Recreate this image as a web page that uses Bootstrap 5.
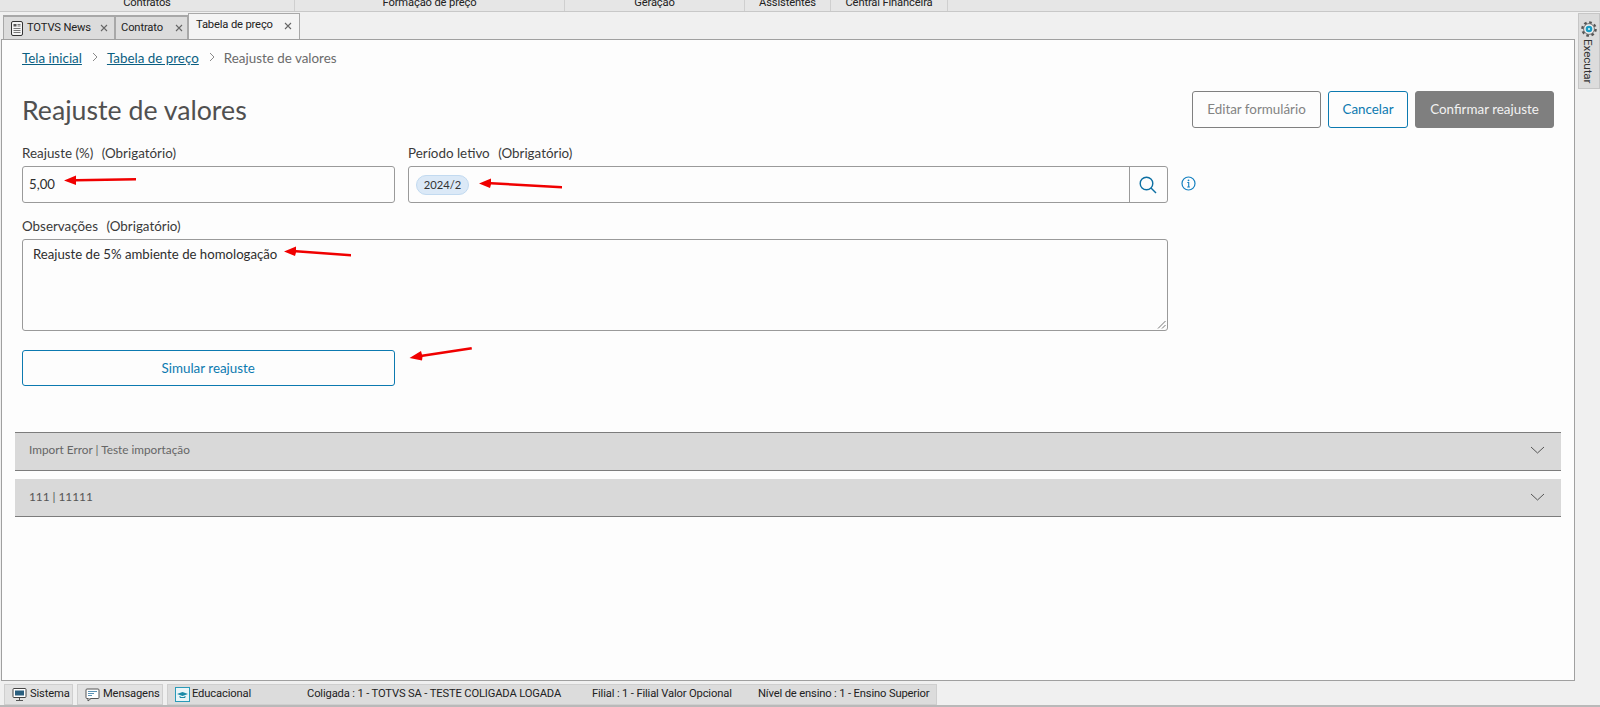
<!DOCTYPE html>
<html lang="pt-BR"><head><meta charset="utf-8"><title>Reajuste de valores</title>
<link href="https://cdn.jsdelivr.net/npm/bootstrap@5.3.0/dist/css/bootstrap.min.css" rel="stylesheet">
<style>
html,body{height:707px;overflow:hidden}
body{background:#f0f0f0;font-family:"Lato","Liberation Sans",sans-serif;color:#333}
.desk{font-family:"Roboto","Noto Sans",sans-serif;font-size:11.2px;letter-spacing:-.15px;color:#222}
.shell{width:1600px;height:707px}
.ribbon{height:12px;background:#e6e6e6;border-bottom:1px solid #c8c8c8;overflow:hidden}
.ribbon span{height:11px;line-height:0;padding-top:3px;border-right:1px solid #cfcfcf;text-align:center;display:block}
.r1{width:295px}.r2{width:270px}.r3{width:180px}.r4{width:86px}.r5{width:117px}
.tabstrip{height:27px;padding-left:3px}
.dtab{height:24px;background:#dcdcdc;border:2px solid #a8a8a8;border-bottom:0;border-right-width:1px;border-left-width:1px;padding:0 4px 0 5px;flex-shrink:0}
.dtab.on{height:26px;background:#f4f4f4;border-width:1px;border-bottom:0;padding:0 7px 2px 7px}
.wtotvs{width:112px;padding-left:7px;padding-right:6px}.wcontr{width:73px}.wtab{width:112px}
.closex{margin-left:auto;flex-shrink:0}
.mainrow{height:642px;padding-left:1px}
.panel{width:1574px;height:642px;flex-shrink:0;background:#fdfdfd;border:1px solid #a0a0a0;padding:0 13px 0 13px}
.crumbs{padding:8px 0 0 7px;height:50px;font-size:13.4px;color:#6b6b6b}
.crumbs a{color:#0b5f82}
.crumbs svg{margin:0 9px 0 10px}
.pagehead{padding:0 7px 0 7px;height:38px}
.pagetitle{font-size:26.7px;font-weight:400;color:#505050;margin:0;line-height:38px;padding-top:2px}
.headbtns{gap:7px}
.tb{height:37px;font-size:13.4px;border-radius:3px;padding:0;font-family:"Lato",sans-serif}
.tb1{width:129px;background:transparent;border:1px solid #808080;color:#838383}
.tb2{width:80px;background:transparent;border:1px solid #0c7ab0;color:#0c7ab0}
.tb3{width:139px;background:#7f7f7f;border:1px solid #7f7f7f;color:#f2f2f2}
.fieldarea{padding:17px 0 0 7px;width:1160px}
.flabel{font-size:13.4px;color:#3a3a3a;line-height:17px;margin:0 0 4px;display:block}
.flabel i{font-style:normal;margin-left:5px}
.labeltwo{margin-top:15px}
.f1{width:372.5px;flex-shrink:0}.f2{width:759.500px;margin-left:13.500px;flex-shrink:0}
.box{height:37px;background:#fdfdfd;border:1px solid #9a9a9a;border-radius:3px;font-size:13.2px;color:#2e2e2e;padding:0 7px}
.valbox{padding-left:6px}
.chipx{height:20px;width:53px;border-radius:10px;background:#dbe9f7;border:1px solid #c2daf0;font-size:11.2px;text-align:center;line-height:18px;color:#333}
.srch{width:38px;height:35px;border-left:1px solid #9a9a9a;margin-right:-7px}
.infoic{margin-left:13px;margin-bottom:12px;flex-shrink:0;line-height:0}
.areabox{width:1146px;height:92px;padding:6px 10px;line-height:17px}
.grip{position:absolute;right:1px;bottom:1px}
.simbtn{width:372.5px;height:36px;margin-top:19px;background:transparent;border:1px solid #0c7ab0;border-radius:3px;color:#0c7ab0;font-size:13.4px;font-family:"Lato",sans-serif;padding:0}
.accs{margin-top:46px}
.accrow{height:38px;background:#d9d9d9;padding:0 16px 2px 14px;font-size:11.8px;color:#666;border-bottom:1px solid #7c7c7c}
.accrow.one{border-top:1px solid #7c7c7c;height:39px;padding-bottom:3px}
.accrow.two{margin-top:8px;color:#555}
.sidecol{padding:0 0 0 3px;margin-top:-26px;height:76px}
.sidetab{width:22px;height:76px;background:#dcdcdc;border:1px solid #c6c6c6;padding-top:7px}
.vtxt{writing-mode:vertical-rl;color:#333;font-size:11.8px;line-height:1;margin:2px 3px 0 0}
.statusrow{height:24px;padding:3px 0 0 4px}
.sbtn{height:21px;background:#e2e2e2;border:1px solid #cfcfcf;margin-right:4px;gap:3px;padding:0 0 0 7px;flex-shrink:0}
.wsis{width:69px}.wmsg{width:86px}
.sbar{background:#dcdcdc;border:1px solid #cfcfcf;height:21px;width:770px;flex-shrink:0;padding:0 0 0 7px;white-space:nowrap}
.capx{width:132px;gap:2px;flex-shrink:0}
.s1{width:285px;flex-shrink:0}.s2{width:166px;flex-shrink:0}
.botline{height:2px;background:#b9b9b9}
.redmarks{position:absolute;left:0;top:0;pointer-events:none}
.redmarks polygon{fill:#f00000}
</style></head><body>
<div class="shell d-flex flex-column position-relative">
 <div class="ribbon desk d-flex"><span class="r1">Contratos</span><span class="r2">Formação de preço</span><span class="r3">Geração</span><span class="r4">Assistentes</span><span class="r5">Central Financeira</span></div>
 <div class="tabstrip desk d-flex align-items-end">
  <div class="dtab wtotvs d-flex align-items-center"><svg width="12" height="15" viewBox="0 0 12 15" class="me-1 flex-shrink-0"><rect x=".5" y=".5" width="11" height="14" rx="1.500" fill="#f4f4f4" stroke="#333"/><path d="M2.500 3h3v2.500h-3z" fill="#555"/><path d="M6.500 3.500h3M6.500 5h3M2.500 7.500h7M2.500 9.500h7M2.500 11.500h7" stroke="#777"/></svg><span>TOTVS News</span><svg class="closex" width="8" height="8" viewBox="0 0 8 8"><path d="M1 1l6 6M7 1L1 7" stroke="#666" stroke-width="1.100"/></svg></div>
  <div class="dtab wcontr d-flex align-items-center"><span>Contrato</span><svg class="closex" width="8" height="8" viewBox="0 0 8 8"><path d="M1 1l6 6M7 1L1 7" stroke="#666" stroke-width="1.100"/></svg></div>
  <div class="dtab on wtab d-flex align-items-center"><span>Tabela de preço</span><svg class="closex" width="8" height="8" viewBox="0 0 8 8"><path d="M1 1l6 6M7 1L1 7" stroke="#666" stroke-width="1.100"/></svg></div>
 </div>
 <div class="mainrow d-flex">
  <div class="panel">
   <div class="crumbs d-flex align-items-start"><a href="#">Tela inicial</a><svg width="6" height="10" viewBox="0 0 6 10" class="mt-1"><path d="M1 1l4 4-4 4" fill="none" stroke="#8a8a8a"/></svg><a href="#">Tabela de preço</a><svg width="6" height="10" viewBox="0 0 6 10" class="mt-1"><path d="M1 1l4 4-4 4" fill="none" stroke="#8a8a8a"/></svg><span>Reajuste de valores</span></div>
   <div class="pagehead d-flex align-items-center justify-content-between">
    <h1 class="pagetitle">Reajuste de valores</h1>
    <div class="d-flex headbtns"><button class="btn tb tb1">Editar formulário</button><button class="btn tb tb2">Cancelar</button><button class="btn tb tb3">Confirmar reajuste</button></div>
   </div>
   <div class="fieldarea">
    <div class="d-flex">
     <div class="f1"><label class="flabel">Reajuste (%) <i>(Obrigatório)</i></label><div class="box valbox d-flex align-items-center">5,00</div></div>
     <div class="f2"><label class="flabel">Período letivo <i>(Obrigatório)</i></label><div class="box d-flex align-items-center"><span class="chipx">2024/2</span><span class="srch ms-auto d-flex align-items-center justify-content-center"><svg width="18" height="18" viewBox="0 0 18 18"><circle cx="7.500" cy="7.500" r="6.300" fill="none" stroke="#0c6fa3" stroke-width="1.400"/><path d="M12 12l5 5" stroke="#0c6fa3" stroke-width="1.400"/></svg></span></div></div>
     <div class="infoic align-self-end"><svg width="15" height="15" viewBox="0 0 15 15"><circle cx="7.500" cy="7.500" r="6.500" fill="none" stroke="#1580c0" stroke-width="1.200"/><path d="M6.300 6.500h1.400v4M6.200 11h2.700" fill="none" stroke="#1580c0" stroke-width="1.100"/><circle cx="7.500" cy="4.300" r=".9" fill="#1580c0"/></svg></div>
    </div>
    <label class="flabel labeltwo">Observações <i>(Obrigatório)</i></label>
    <div class="box areabox position-relative">Reajuste de 5% ambiente de homologação<svg class="grip" width="9" height="9" viewBox="0 0 9 9"><path d="M8.500 1L1 8.500M8.500 5L5 8.500" stroke="#777"/></svg></div>
    <button class="btn simbtn d-block">Simular reajuste</button>
   </div>
   <div class="accs">
    <div class="accrow one d-flex align-items-center justify-content-between"><span>Import Error | Teste importação</span><svg width="15" height="8" viewBox="0 0 15 8"><path d="M1 1l6.500 6L14 1" fill="none" stroke="#555"/></svg></div>
    <div class="accrow two d-flex align-items-center justify-content-between"><span>111 | 11111</span><svg width="15" height="8" viewBox="0 0 15 8"><path d="M1 1l6.500 6L14 1" fill="none" stroke="#555"/></svg></div>
   </div>
  </div>
  <div class="sidecol desk"><div class="sidetab d-flex flex-column align-items-center"><svg width="16" height="16" viewBox="0 0 16 16" class="flex-shrink-0"><circle cx="8" cy="8" r="6.600" fill="none" stroke="#555" stroke-width="2.400" stroke-dasharray="2.600 2.580"/><circle cx="8" cy="8" r="5.400" fill="#eee" stroke="#555" stroke-width=".8"/><circle cx="8" cy="8" r="3.300" fill="#1a9cc4"/><circle cx="8" cy="8" r="1" fill="#dff"/></svg><span class="vtxt">Executar</span></div></div>
 </div>
 <div class="statusrow desk d-flex">
  <div class="sbtn wsis d-flex align-items-center"><svg width="15" height="15" viewBox="0 0 15 15"><rect x="1" y="1.500" width="13" height="9" rx="1" fill="#fff" stroke="#444"/><rect x="3" y="3.500" width="9" height="5" fill="#2a5f7f"/><path d="M7.500 11v2M4 13.500h7" stroke="#555"/></svg>Sistema</div>
  <div class="sbtn wmsg d-flex align-items-center"><svg width="15" height="15" viewBox="0 0 15 15"><rect x="1" y="2" width="13" height="9.500" rx="1" fill="#fff" stroke="#555"/><path d="M3 4.500h9M3 6.500h6M3 8.500h4" stroke="#5c93b5"/><path d="M3 11.500v2.500l3-2.500" fill="#fff" stroke="#555"/></svg>Mensagens</div>
  <div class="sbar d-flex align-items-center"><span class="capx d-flex align-items-center"><svg width="15" height="15" viewBox="0 0 15 15"><rect x=".5" y=".5" width="14" height="14" fill="#eaf5f8" stroke="#2a9ab8"/><path d="M2 7L7.500 5l5.500 2-5.500 2z" fill="#1a8aa8"/><path d="M5 9v1.500h5V9" fill="none" stroke="#1a8aa8"/></svg>Educacional</span><span class="s1">Coligada : 1 - TOTVS SA - TESTE COLIGADA LOGADA</span><span class="s2">Filial : 1 - Filial Valor Opcional</span><span>Nível de ensino : 1 - Ensino Superior</span></div>
 </div>
 <div class="botline"></div>
 <svg class="redmarks" width="1600" height="707" viewBox="0 0 1600 707">
  <polygon points="136,178 76,179 76,175.500 64,180.500 76,185 76,181.500 136,180.500"/>
  <polygon points="562,186 491,182 491,178.500 479,183.500 490,188 491,184.500 562,188.500"/>
  <polygon points="351,254 296,250 296,246.500 284,251.500 295,256 296,252.500 351,256.500"/>
  <polygon points="471.500,347 422,354.500 421,351 409.500,358 422,360.500 422.500,357 472,349.500"/>
 </svg>
</div>
</body></html>
